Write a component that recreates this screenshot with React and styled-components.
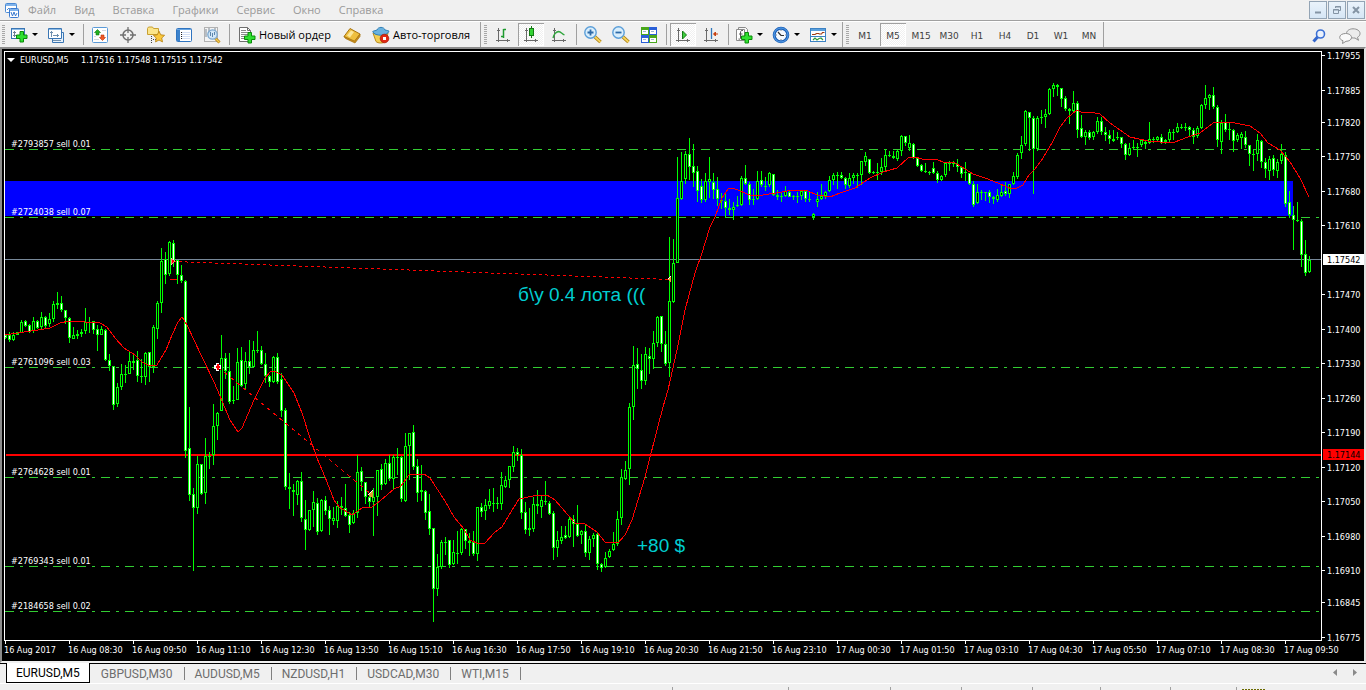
import React, { useState } from "react";
import styled, { createGlobalStyle, css } from "styled-components";

const GlobalStyle = createGlobalStyle`
  * {
    box-sizing: border-box;
  }
  body {
    margin: 0;
    background: #f0f0f0;
    font-family: "Open Sans", "Noto Sans", sans-serif;
    font-size: 11px;
  }
  button {
    font: inherit;
    color: inherit;
    padding: 0;
    margin: 0;
    border: 0;
    background: none;
  }
`;

const Terminal = styled.div`
  display: flex;
  flex-direction: column;
  height: 100vh;
  overflow: hidden;
`;

const MenuBar = styled.nav`
  display: flex;
  align-items: center;
  height: 21px;
  padding: 0 1px 0 4px;
  border-bottom: 1px solid #a0a0a0;
`;

const MenuItems = styled.div`
  display: flex;
  flex: 1;
  gap: 18px;
  margin-left: 8px;
`;

const MenuItem = styled.button`
  color: #9a9a9a;
  line-height: 18px;
`;

const WindowButtons = styled.div`
  display: flex;
  gap: 1px;
`;

const WindowButton = styled.button`
  display: flex;
  align-items: center;
  justify-content: center;
  width: 18px;
  height: 18px;
  border: 1px solid #93a4b5;
  background: linear-gradient(#eaf3fb, #d6e6f5);
`;

const ToolRow = styled.div`
  display: flex;
  height: 26px;
  border-top: 1px solid #fff;
`;

const ToolGroup = styled.div`
  display: flex;
  align-items: center;
  border-right: 1px solid #a0a0a0;
  margin-right: 1px;
`;

const Grip = styled.span`
  width: 3px;
  height: 20px;
  margin: 0 ${(props) => props.$after || 2}px 0 2px;
  background: repeating-linear-gradient(#a8a8a8 0 1px, #f0f0f0 1px 2px);
`;

const Separator = styled.span`
  width: 1px;
  height: 21px;
  margin: 0 2px 0 3px;
  background: #a0a0a0;
`;

const pressed = css`
  background: repeating-conic-gradient(#fff 0 25%, #f0f0f0 0 50%) 0 0 / 2px 2px;
  box-shadow: inset 1px 1px 0 #a0a0a0, inset -1px -1px 0 #fff;
`;

const ToolButton = styled.button`
  display: flex;
  align-items: center;
  justify-content: center;
  width: 26px;
  height: 23px;
  margin: 0 1px;
  padding-top: 1px;
  ${(props) => props.$pressed && pressed}
`;

const DropButton = styled.button`
  display: flex;
  align-items: center;
  gap: 4px;
  width: 37px;
  height: 23px;
  padding-left: 4px;
`;

const TextButton = styled.button`
  display: flex;
  align-items: center;
  gap: 3px;
  width: ${(props) => props.$width}px;
  height: 23px;
  padding-left: 6px;
  color: #000;
  white-space: nowrap;
`;

const PeriodButton = styled(ToolButton)`
  padding-top: 2px;
  font-family: "DejaVu Sans", sans-serif;
  font-size: 9px;
  color: #404040;
`;

const ToolEnd = styled.div`
  display: flex;
  flex: 1;
  align-items: center;
  justify-content: flex-end;
  gap: 13px;
  padding-right: 5px;
`;

const EndButton = styled.button`
  display: flex;
  padding-top: 2px;
`;

const ChartWindow = styled.main`
  display: grid;
  flex: 1;
  min-height: 0;
  grid-template-columns: 1fr 42px;
  grid-template-rows: 1fr 20px;
  padding: 2px 0 0 2px;
  background: #000;
  border: 2px solid #8c8c8c;
  border-right-color: #e3e3e3;
  border-bottom-color: #f0f0f0;
  font-family: "DejaVu Sans Condensed", "DejaVu Sans", sans-serif;
  font-size: 9px;
  color: #fff;
`;

const Plot = styled.div`
  position: relative;
  min-width: 0;
  min-height: 0;
  border: 1px solid #fff;
  overflow: hidden;
`;

const Drawing = styled.svg`
  display: block;
  width: 100%;
  height: 100%;
  overflow: ${(props) => (props.$spill ? "visible" : "hidden")};
`;

const PlotTitle = styled.div`
  position: absolute;
  top: 2px;
  left: 2px;
  display: flex;
  align-items: center;
  gap: 5px;
  line-height: 12px;
`;

const TitleSymbol = styled.span`
  min-width: 56px;
`;

const PriceScale = styled.div`
  min-height: 0;
`;

const TimeScale = styled.div`
  display: flex;
  grid-column: 1 / 3;
  overflow: hidden;
`;

const TimeLabel = styled.span`
  flex: 0 0 64px;
  line-height: 12px;
  white-space: nowrap;

  &::before {
    content: "";
    display: block;
    width: 1px;
    height: 3px;
    margin-left: 1px;
    background: #fff;
  }
`;

const TabBar = styled.div`
  display: flex;
  height: 20px;
  padding-left: 6px;
  border-top: 1px solid #000;
  font-family: Roboto, sans-serif;
  font-size: 12px;
`;

const Tab = styled.button`
  display: flex;
  align-items: center;
  height: 19px;
  padding: 0 11px;
  color: #6d6d6d;

  &::after {
    content: "";
    width: 1px;
    height: 13px;
    margin: 0 -12px 0 11px;
    background: #808080;
  }

  ${(props) =>
    props.$active &&
    css`
      margin-top: -1px;
      height: 20px;
      padding: 0 9px;
      color: #000;
      background: #fff;
      border: 1px solid #000;
      border-top: 0;

      &::after {
        display: none;
      }
    `}
`;

const TabArrows = styled.div`
  display: flex;
  gap: 12px;
  align-items: center;
  margin-left: auto;
  padding-right: 8px;
`;

const ArrowButton = styled.button`
  display: flex;
  padding-bottom: 3px;
`;

const StatusBar = styled.footer`
  display: flex;
  justify-content: flex-end;
  height: 7px;
  padding: 3px 100px 0 0;
  border-top: 1px solid #fff;
`;

const StatusCell = styled.span`
  width: ${(props) => props.$width}px;
  border-left: 1px solid #a0a0a0;
`;

const Traffic = styled.span`
  display: block;
  width: 24px;
  height: 1px;
  margin: 2px 0 0 5px;
  background: repeating-linear-gradient(90deg, #6b6b00 0 2px, #f0f0f0 2px 3px);
`;

/* ---------- icons ---------- */

function Icon({ children, size = 18, width }) {
  return (
    <svg width={width || size} height={size} viewBox={`0 0 ${width || size} ${size}`} fill="none" aria-hidden="true">
      {children}
    </svg>
  );
}

const Caret = () => (
  <svg width="6" height="3" viewBox="0 0 6 3" aria-hidden="true">
    <path d="M0 0h6L3 3z" fill="#000" />
  </svg>
);

const Plus = ({ x, y }) => (
  <path
    transform={`translate(${x} ${y})`}
    d="M4 .5h3.500V4H11v3.500H7.500V11H4V7.500H.5V4H4z"
    fill="#2fe02f"
    stroke="#0a8a0a"
  />
);

const Axes = () => (
  <g stroke="#6a6a6a" shapeRendering="crispEdges">
    <path d="M4.500 2v14M2 14.500h14" />
    <path d="M3 4.500h3M13.500 13v3" />
  </g>
);

const LogoIcon = () => (
  <Icon size={16}>
    <rect x="1.500" y="1.500" width="11" height="9" rx="1" fill="#fff" stroke="#4a8ad4" />
    <path d="M2 3h10" stroke="#7fb2ea" strokeWidth="2" />
    <path d="M3 8l2-2 2 3" stroke="#4a8ad4" />
    <rect x="5.500" y="6.500" width="9" height="9" rx="1" fill="#fff" stroke="#3b7bd0" />
    <path d="M6 8h8" stroke="#7fb2ea" strokeWidth="2" />
    <path d="M7 10l1.500 4L10 10l1.500 4 1.500-3" stroke="#3b7bd0" />
  </Icon>
);

const NewChartIcon = () => (
  <Icon>
    <rect x="1.500" y="2.500" width="13" height="10" fill="#fff" stroke="#3a76b4" />
    <path d="M2 3.500h12" stroke="#8dbbe6" />
    <path d="M4.500 5v6M3 6.500h3M3 9.500h5" stroke="#6f8196" />
    <Plus x={6} y={5} />
  </Icon>
);

const ProfilesIcon = () => (
  <Icon>
    <path d="M5.500 6.500h11v10h-11z" fill="#e8f2fc" stroke="#3a76b4" />
    <path d="M1.500 2.500h13v10h-13z" fill="#fff" stroke="#3a76b4" />
    <path d="M2 3.500h12" stroke="#8dbbe6" />
    <path d="M4.500 5v6M3 6.500h3M6 9.500h6M10.500 8v3M6 14.500h8" stroke="#6f8fae" />
  </Icon>
);

const MarketIcon = () => (
  <Icon>
    <rect x="1.500" y="1.500" width="15" height="15" rx="1" fill="#fff" stroke="#5a9ad8" />
    <path d="M3 13.500h5M11 4.500h4M3 10.500h2" stroke="#d4d9df" />
    <path d="M6.500 3.500l3 3H8v2.500H5V6.500H3.500z" fill="#22b022" stroke="#0d7a0d" strokeWidth=".6" />
    <path d="M11.500 14.500l-3-3H10V9h3v2.500h1.500z" fill="#f05a28" stroke="#b83208" strokeWidth=".6" />
  </Icon>
);

const CrosshairIcon = () => (
  <Icon>
    <circle cx="9" cy="9" r="5" stroke="#707070" strokeWidth="1.500" />
    <path d="M9 1v6M9 11v6M1 9h6M11 9h6" stroke="#707070" strokeWidth="1.300" />
  </Icon>
);

const FavoritesIcon = () => (
  <Icon>
    <path d="M.5 2.500L1.500 1h4l1 1.500h5v6h-11z" fill="#fbe58a" stroke="#c8a032" />
    <path d="M4.500 10v7M6 13.500h3" stroke="#444" strokeDasharray="1 1" />
    <path
      d="M12 5.200l1.700 3.600 3.900.5-2.900 2.700.8 3.900-3.500-1.900-3.500 1.900.8-3.900-2.900-2.700 3.900-.5z"
      fill="#fbc83c"
      stroke="#b98718"
      strokeWidth=".9"
    />
  </Icon>
);

const NavigatorIcon = () => (
  <Icon>
    <rect x="1.500" y="2.500" width="15" height="13" rx="1" fill="#fff" stroke="#2f74c0" />
    <path d="M2 3.500h14" stroke="#6aa6e2" />
    <path d="M2 4h3v11H2z" fill="#3c82cc" />
    <path d="M7 6.500h8M7 8.500h8M7 10.500h8M7 12.500h8" stroke="#d3dff5" />
    <path d="M6 6.500h1M6 8.500h1M6 10.500h1M6 12.500h1" stroke="#222" />
  </Icon>
);

const TesterIcon = () => (
  <Icon>
    <rect x="1.500" y="1.500" width="13" height="14" fill="#f4f4f4" stroke="#b2b2b2" />
    <path d="M3 3v8M6 2v5M12 2v6" stroke="#7b8794" />
    <path d="M12.500 12.500l4 4" stroke="#b47f14" strokeWidth="3" />
    <path d="M12.500 12.500l4 4" stroke="#f2cb52" strokeWidth="1.400" />
    <circle cx="9.500" cy="8.500" r="4.700" fill="#cfe6f8" fillOpacity=".9" stroke="#7ba7cf" strokeWidth="1.300" />
    <path d="M7.500 6v4M9.500 7v4M11.500 6v3" stroke="#5c86ad" />
  </Icon>
);

const NewOrderIcon = () => (
  <Icon>
    <path d="M1.500 1.500h8l3 3v11h-11z" fill="#fff" stroke="#6f6f6f" />
    <path d="M9.500 1.500v3h3" stroke="#6f6f6f" />
    <path d="M3 4.500h5M3 6.500h7M3 8.500h7M3 10.500h4M3 12.500h4" stroke="#8a8a8a" />
    <Plus x={6} y={6} />
  </Icon>
);

const EditorIcon = () => (
  <Icon>
    <path d="M1 10.500L7 2.500l10 5.500-5.500 8z" fill="#eebf3f" stroke="#a87410" />
    <path d="M1 10.500l1.500 2L12 17l5-6.500V8l-5.500 7z" fill="#c78d1c" stroke="#a87410" strokeWidth=".7" />
    <path d="M4 9.500l4-5 3 1.500-4 5.500z" fill="#fbe69b" />
  </Icon>
);

const AutoTradeIcon = () => (
  <Icon>
    <path d="M1 7c2 1 12 2 15 0l-2 8.500c-3 2-8 2-10 0z" fill="#f3cf52" stroke="#b88a1c" />
    <path
      d="M.7 5.500C2 4.500 4 4.800 5 4c1-3.500 7-3.500 8 0 1.500.5 3 .3 4 1.200-1 3-5 4-8 4S1.500 8.500.7 5.500z"
      fill="#69b2df"
      stroke="#2f7fb6"
    />
    <circle cx="12.500" cy="12.500" r="4.300" fill="#e02a14" stroke="#a81404" strokeWidth=".7" />
    <rect x="11" y="11" width="3" height="3" fill="#fff" />
  </Icon>
);

const BarsIcon = () => (
  <Icon>
    <Axes />
    <path d="M9.500 3v9M7 10.500h2.500M9.500 3.500H12" stroke="#1f9a2f" strokeWidth="1.500" />
  </Icon>
);

const CandlesIcon = () => (
  <Icon>
    <Axes />
    <path d="M9.500 0v12" stroke="#157a15" />
    <rect x="7.500" y="2.500" width="4" height="7" fill="#34d334" stroke="#157a15" />
  </Icon>
);

const LineIcon = () => (
  <Icon>
    <Axes />
    <path d="M3 12c1-4 3-6 5.500-6.500C11 5.500 12 8 14.500 9" stroke="#2fa53c" strokeWidth="1.300" />
  </Icon>
);

function ZoomIcon({ plus }) {
  return (
    <Icon>
      <path d="M10.500 10.500l6 5.500" stroke="#a87c10" strokeWidth="3.500" />
      <path d="M10.500 10.500l6 5.500" stroke="#f6d35a" strokeWidth="1.800" />
      <circle cx="6.500" cy="6.500" r="5.700" fill="#d9eefc" stroke="#5b9ed8" strokeWidth="1.400" />
      <path d={plus ? "M3.500 6.500h6M6.500 3.500v6" : "M3.500 6.500h6"} stroke="#2d6aa8" strokeWidth="1.800" />
    </Icon>
  );
}

const TileIcon = () => (
  <Icon>
    <path d="M1 1h8v8H1z" fill="#4aa81c" />
    <path d="M9 1h8v8H9z" fill="#2a5fd8" />
    <path d="M1 9h8v8H1z" fill="#2a5fd8" />
    <path d="M9 9h8v8H9z" fill="#4aa81c" />
    <path d="M2 4h6v4H2zM10 4h6v4h-6zM2 12h6v4H2zM10 12h6v4h-6z" fill="#fff" />
    <path d="M3 5.500h3M11 5.500h3M3 13.500h3M11 13.500h3" stroke="#9db4d8" />
  </Icon>
);

const AutoScrollIcon = () => (
  <Icon>
    <Axes />
    <path d="M8.500 5v8l4-4z" fill="#3ccf3c" stroke="#157a15" />
  </Icon>
);

const ShiftIcon = () => (
  <Icon>
    <Axes />
    <path d="M9.500 2v11" stroke="#3277bb" strokeWidth="1.300" />
    <path d="M16 8h-4M13.500 6L11.500 8l2 2z" stroke="#c8410f" fill="#c8410f" />
  </Icon>
);

const IndicatorsIcon = () => (
  <Icon>
    <path d="M3.500 3.500V1.500h7l2 2v10h-3" fill="#f7f7f7" stroke="#8a8a8a" />
    <path d="M1.500 3.500h8v11h-8z" fill="#fff" stroke="#8a8a8a" />
    <path d="M8 4.500c-2-.5-2.500.5-2.500 2.500v5c0 1-.8 1.500-2 1M4 8h3.500" stroke="#555" />
    <Plus x={6} y={6} />
  </Icon>
);

const ClockIcon = () => (
  <Icon>
    <circle cx="9" cy="9" r="6.800" fill="#f6fafe" stroke="#1f62b8" strokeWidth="3" />
    <circle cx="9" cy="9" r="7" stroke="#58a2ec" strokeWidth="1" />
    <path d="M6 6l3 3.500h3" stroke="#333" strokeWidth="1.200" />
    <path d="M9 4v1M9 13v1M4 9h1M13 9h1" stroke="#888" />
  </Icon>
);

const TemplatesIcon = () => (
  <Icon>
    <rect x="1.500" y="2.500" width="15" height="13" fill="#fff" stroke="#3c82c4" />
    <path d="M2 4h14" stroke="#5a9fdc" strokeWidth="2" />
    <path d="M2 10.500h14" stroke="#3c82c4" />
    <path d="M3 8.500h3l1.500-1h2l1 .5h2l1-1.500h2" stroke="#a03c14" strokeWidth="1.200" />
    <path d="M4 14l2-2 2 2 2-1.500 2-.5 2 2" stroke="#2f9a3c" strokeWidth="1.200" />
  </Icon>
);

const SearchIcon = () => (
  <Icon size={14}>
    <path d="M1.500 12.500L6 7.500" stroke="#3466cc" strokeWidth="3" />
    <circle cx="8.500" cy="5" r="4" fill="#eaf1fc" stroke="#3b6fd4" strokeWidth="1.600" />
  </Icon>
);

const ChatIcon = () => (
  <Icon size={16} width={22}>
    <path
      d="M14 .8c4 0 7 2 7 4.700 0 1.800-1 3-2.500 3.800l1 3-3.500-2.300c-4 .3-8.500-1.500-8.500-4.500C7.500 2.800 10.500.8 14 .8z"
      fill="#ececec"
      stroke="#8e8e8e"
    />
    <path
      d="M6.500 5.500c3.500 0 6 1.700 6 4s-2.500 3.800-5.500 3.800L3.500 15.500l.5-2.800C2 12 .7 10.800.7 9.300c0-2.300 2.800-3.800 5.800-3.800z"
      fill="#fafafa"
      stroke="#8e8e8e"
    />
  </Icon>
);

/* ---------- chart data ---------- */

// high, body top, body bottom, low (px on the price axis) and direction
const CANDLES = `
334 335 338 339 d|332 335 340 342 d|332 335 340 341 u|332 332 335 335 u|320 322 333 333 u|320 321 326 327 d|324 325 332 333 d|317 321 331 333 u|320 321 328 329 d|312 317 327 329 u|316 317 326 328 d|313 319 324 327 u|301 304 319 322 u|292 303 305 309 d|296 303 310 312 d|310 310 318 324 d|317 318 338 343 d|327 335 339 339 u|330 334 336 339 u|329 332 334 337 u|308 322 331 334 u|317 322 323 333 u|321 321 330 334 d|325 329 335 351 d|326 329 335 335 u|329 330 360 361 d|354 360 366 371 d|366 366 405 410 d|383 387 404 407 u|364 374 387 390 u|365 374 375 383 u|352 361 374 374 u|355 361 363 370 u|351 360 376 382 d|359 376 377 383 d|352 353 377 385 u|352 352 367 382 d|325 327 367 373 u|301 303 329 339 u|248 261 303 313 u|252 259 275 284 d|241 242 274 276 u|240 243 261 267 d|260 260 275 284 d|265 275 281 283 d|280 281 451 458 d|407 448 495 501 d|488 494 508 571 d|456 464 508 514 u|464 464 494 495 d|438 456 493 504 u|452 456 457 469 u|404 426 455 465 u|412 413 426 440 u|335 358 411 411 u|353 358 371 379 d|353 371 402 404 d|386 400 401 404 u|348 362 400 400 u|347 360 386 387 d|352 361 384 390 u|340 361 367 374 d|341 350 367 367 u|331 350 351 353 d|346 350 364 365 d|353 364 376 383 d|375 376 382 387 d|356 357 382 383 u|353 357 382 384 d|373 379 411 417 d|408 410 487 490 d|473 487 489 509 d|484 490 492 516 d|480 481 495 505 u|472 481 518 522 d|500 519 530 550 d|510 510 530 531 u|491 502 510 527 u|498 503 532 535 d|499 500 531 532 u|496 500 511 515 d|506 510 519 535 d|507 518 521 525 u|501 506 521 528 u|497 506 508 515 u|484 508 516 517 d|512 515 525 533 d|510 513 523 524 u|455 472 513 518 u|467 471 482 491 d|482 482 497 504 d|495 497 502 508 d|488 497 502 536 u|470 470 497 516 u|464 469 485 490 d|459 463 484 485 u|455 463 479 481 d|455 457 479 490 u|448 457 458 475 u|456 457 499 502 d|433 446 501 502 u|433 433 446 480 u|425 432 467 470 d|459 466 493 502 d|465 490 492 501 u|490 491 513 520 d|494 511 529 535 d|528 528 589 622 d|554 567 589 596 u|540 542 567 569 u|537 542 543 555 u|540 540 565 568 d|540 552 564 565 u|531 553 554 564 u|528 529 553 555 u|529 529 541 549 d|533 541 543 556 d|531 542 554 556 d|507 507 554 561 u|503 507 512 517 d|499 505 511 520 u|489 501 506 509 u|488 503 504 512 u|497 503 504 509 u|472 485 504 510 u|476 480 487 488 u|466 466 480 488 u|446 452 467 472 u|448 452 455 461 d|449 455 513 519 d|502 512 530 534 d|508 528 530 536 u|497 504 529 532 u|490 504 506 514 d|495 500 507 518 u|481 501 502 505 u|501 503 514 515 d|511 513 548 560 d|531 540 548 557 u|526 537 541 544 u|526 535 538 539 d|516 519 537 538 u|515 519 524 547 d|505 524 536 537 d|530 531 535 544 u|525 531 553 557 d|536 539 553 560 u|533 535 539 547 u|533 534 564 570 d|563 564 568 572 d|552 558 567 568 u|549 551 557 558 u|532 544 550 551 u|511 519 544 546 u|469 477 518 525 u|461 470 479 480 u|403 407 469 485 u|346 365 407 420 u|348 364 369 389 d|354 370 381 389 d|347 354 381 385 u|348 356 359 374 d|331 343 359 369 u|316 317 343 347 u|316 316 344 352 d|331 344 364 366 d|237 301 363 377 u|239 263 302 303 u|157 198 263 263 u|152 181 199 200 u|151 154 179 184 u|138 154 167 180 d|144 166 173 187 d|166 171 191 202 d|179 186 200 203 d|173 181 200 202 u|157 179 182 198 u|173 182 190 199 d|177 189 199 206 d|193 200 201 209 d|194 201 208 218 d|199 208 210 215 d|202 207 210 220 u|196 205 206 207 u|176 178 205 206 u|165 178 184 185 d|182 184 200 205 d|189 199 200 205 d|171 181 199 200 u|171 180 185 187 d|177 186 187 191 d|172 173 185 187 u|174 174 195 196 d|190 195 197 200 d|192 196 197 202 d|186 191 196 197 u|190 192 197 197 d|195 196 197 200 d|192 196 197 203 u|190 191 196 200 u|191 191 199 202 d|191 199 200 202 d|213 214 217 220 u|192 199 202 207 u|184 196 199 200 u|191 192 196 199 u|176 180 191 192 u|173 175 180 185 u|172 175 176 189 d|172 175 178 179 d|177 178 185 189 d|173 178 186 188 u|173 175 178 184 u|173 175 176 188 d|161 161 175 185 u|152 156 162 166 u|159 159 173 174 d|171 172 173 174 d|163 172 173 180 u|158 167 172 175 u|149 155 167 171 u|151 155 156 157 u|151 156 158 159 d|150 151 159 161 u|135 136 151 156 u|136 136 143 146 d|135 143 148 151 u|143 144 158 159 d|157 158 166 167 d|164 165 171 172 d|163 171 172 173 u|171 172 173 175 u|162 168 173 174 d|171 173 180 183 d|175 176 180 181 u|163 163 175 177 u|161 163 164 171 u|161 163 164 167 u|159 164 167 172 d|166 167 174 178 d|162 172 173 181 d|173 173 184 185 d|181 184 205 207 d|184 192 203 204 u|190 192 193 200 u|192 192 193 201 d|190 192 197 203 d|196 197 199 204 d|189 195 200 202 u|184 192 196 197 u|182 191 194 196 d|184 184 194 198 u|172 176 184 185 u|153 155 177 179 u|136 145 153 159 u|110 111 144 146 u|112 112 118 151 d|116 118 149 194 d|116 118 149 151 u|110 117 118 124 u|109 114 117 128 u|88 89 114 115 u|83 85 89 97 u|84 85 87 96 d|88 88 99 107 d|96 98 109 111 d|108 109 111 124 d|91 103 111 113 u|101 103 130 138 d|115 128 137 138 d|130 132 137 145 u|130 132 138 140 d|131 132 137 140 u|117 121 132 134 u|117 121 132 135 d|127 132 135 141 d|130 135 139 144 d|130 139 141 142 u|132 137 138 140 u|137 137 144 148 d|143 144 155 160 d|143 148 155 156 u|140 147 148 150 u|143 147 148 157 u|139 140 145 147 u|140 142 144 149 d|122 139 143 144 u|137 139 140 143 u|136 137 140 142 u|134 137 143 144 d|139 140 142 144 u|129 132 140 142 u|129 132 133 140 u|123 127 132 133 u|124 127 128 129 u|123 127 128 131 u|126 127 130 136 d|128 130 137 144 d|126 128 136 138 u|104 105 128 129 u|85 98 105 109 u|94 95 98 110 u|87 95 107 109 d|105 107 140 147 d|120 123 142 154 u|114 122 130 132 d|123 129 130 140 u|129 130 141 152 d|133 135 140 142 u|132 134 138 149 u|131 137 145 148 d|145 145 154 166 d|150 154 155 171 d|134 140 154 161 u|140 141 162 168 d|158 162 169 178 d|156 159 171 180 u|155 158 170 176 d|159 162 171 178 u|144 154 161 164 u|152 155 204 207 d|191 202 215 218 d|206 215 220 250 d|202 220 221 222 u|219 221 255 267 d|240 254 273 276 d|256 260 272 273 u
`
  .trim()
  .split("|")
  .map((row) => {
    const [high, top, bottom, low, dir] = row.split(" ");
    return { high: +high, top: +top, bottom: +bottom, low: +low, down: dir === "d" };
  });

const AVERAGE =
  "5,335 24,332 38,330 50,328 60,323 69,321 100,323 107,327 115,338 124,348 135,355 142,362 150,366 157,365 166,350 172,335 178,322 182,317 187,325 194,340 202,357 214,382 220,396 230,420 238,432 242,428 254,400 265,378 270,372 274,371 282,375 294,393 302,413 310,438 317,458 325,477 334,500 339,507 352,515 362,508 372,507 380,501 394,489 401,486 409,475 424,474 430,478 445,501 454,517 464,529 470,540 479,544 485,543 494,533 502,527 514,507 519,499 533,496 547,495 555,500 568,515 575,523 585,524 597,532 605,542 618,543 625,535 632,520 645,477 657,430 663,407 668,390 677,350 685,310 695,273 702,253 710,227 715,217 722,198 728,189 733,188 740,191 752,196 763,195 782,192 792,190 808,191 817,195 830,197 840,193 855,188 870,178 883,172 897,168 908,158 915,157 922,159 938,160 943,162 955,163 962,167 973,174 988,179 1000,184 1012,189 1017,188 1023,185 1029,175 1035,169 1043,158 1052,143 1060,127 1067,118 1077,110 1083,113 1090,112 1100,114 1110,123 1130,137 1148,141 1160,142 1175,142 1188,137 1200,133 1213,123 1230,122 1250,126 1260,133 1268,143 1280,150 1290,162 1300,178 1309,197";

const ORDERS = [
  { id: "#2793857 sell 0.01", y: 149 },
  { id: "#2724038 sell 0.07", y: 217 },
  { id: "#2761096 sell 0.03", y: 367 },
  { id: "#2764628 sell 0.01", y: 477 },
  { id: "#2769343 sell 0.01", y: 566 },
  { id: "#2184658 sell 0.02", y: 611 },
];

const PRICES = [
  1.17955, 1.17885, 1.1782, 1.1775, 1.1768, 1.1761, 1.1747, 1.174, 1.1733, 1.1726, 1.1719, 1.1712, 1.1705, 1.1698,
  1.1691, 1.16845, 1.16775,
];

const TIMES = [
  "16 Aug 2017", "16 Aug 08:30", "16 Aug 09:50", "16 Aug 11:10", "16 Aug 12:30", "16 Aug 13:50", "16 Aug 15:10",
  "16 Aug 16:30", "16 Aug 17:50", "16 Aug 19:10", "16 Aug 20:30", "16 Aug 21:50", "16 Aug 23:10", "17 Aug 00:30",
  "17 Aug 01:50", "17 Aug 03:10", "17 Aug 04:30", "17 Aug 05:50", "17 Aug 07:10", "17 Aug 08:30", "17 Aug 09:50",
];

const MENU = ["Файл", "Вид", "Вставка", "Графики", "Сервис", "Окно", "Справка"];
const PERIODS = ["M1", "M5", "M15", "M30", "H1", "H4", "D1", "W1", "MN"];
const TABS = ["EURUSD,M5", "GBPUSD,M30", "AUDUSD,M5", "NZDUSD,H1", "USDCAD,M30", "WTI,M15"];
const STATUS = [116, 102, 71, 71, 68, 70, 66, 30];

const priceToY = (price) => Math.round(55 + (1.17955 - price) * 49320);

function Candle({ x, high, top, bottom, low, down }) {
  const height = Math.max(bottom - top, 1);
  return (
    <g>
      <rect x={x} y={high} width="1" height={low - high} fill="#0f0" />
      <rect x={x - 1} y={top} width="3" height={height} fill="#0f0" />
      {height > 2 && <rect x={x} y={top + 1} width="1" height={height - 2} fill={down ? "#fff" : "#000"} />}
    </g>
  );
}

function ChartDrawing() {
  return (
    <Drawing role="img" aria-label="EURUSD,M5">
      <g transform="translate(-5 -52)" shapeRendering="crispEdges">
        <rect x="5" y="181" width="1288" height="35" fill="#00f" />
        {ORDERS.map((order) => (
          <line
            key={order.id}
            x1="5"
            x2="1321"
            y1={order.y + 0.5}
            y2={order.y + 0.5}
            stroke="#32cd32"
            strokeDasharray="9 6 3 6"
          />
        ))}
        <rect x="5" y="259" width="100%" height="1" fill="#778899" />
        <rect x="6" y="454" width="100%" height="2" fill="#f00" />
        {CANDLES.map((candle, i) => (
          <Candle key={i} x={5 + i * 4} {...candle} />
        ))}
        <polyline points={AVERAGE} fill="none" stroke="#f00" />
        <path d="M173 261.500L671 279.500" stroke="#f00" strokeDasharray="3 3" />
        <path d="M218 367L372 495" stroke="#f00" strokeDasharray="4 4" />
        <path d="M170 279.500h7" stroke="#f00" />
        <path d="M171 258l4 3-4 4z" fill="#f00" stroke="#fff" strokeWidth=".5" />
        <path d="M216 363h3v2h2v4h-2v2h-3v-2h-2v-4h2z" fill="#fff" />
        <path d="M217 364h2v2h1v2h-1v2h-2v-2h-1v-2h1z" fill="#f00" />
        <path d="M368 495l5-5v8z" fill="#e0a030" />
        <path d="M368 495l5-5" stroke="#fff" />
        <path d="M668 279l3-3v7z" fill="#e0a030" />
        <path d="M668 279l3-3" stroke="#fff" />
      </g>
      <g transform="translate(-5 -52)" fill="#fff" stroke="none">
        {ORDERS.map((order) => (
          <text key={order.id} x="11" y={order.y - 2}>
            {order.id}
          </text>
        ))}
        <g fill="#00ced1" fontFamily="'Liberation Sans', Arial, sans-serif" fontSize="19">
          <text x="518" y="301">
            б\у 0.4 лота (((
          </text>
          <text x="637" y="552">
            +80 $
          </text>
        </g>
      </g>
    </Drawing>
  );
}

function ScaleDrawing() {
  return (
    <Drawing role="img" aria-label="1.17542" $spill>
      <g transform="translate(0 -51)" fill="#fff">
        {PRICES.map((price) => (
          <g key={price}>
            <rect x="0" y={priceToY(price)} width="3" height="1" />
            <text x="5" y={priceToY(price) + 4}>
              {price.toFixed(5)}
            </text>
          </g>
        ))}
        <rect x="1" y="254" width="41" height="11" />
        <text x="5" y="263" fill="#000">
          1.17542
        </text>
        <rect x="1" y="449" width="41" height="11" fill="#f00" />
        <text x="5" y="458" fill="#000">
          1.17144
        </text>
      </g>
    </Drawing>
  );
}

function App() {
  const [period, setPeriod] = useState("M5");
  const [tab, setTab] = useState("EURUSD,M5");

  return (
    <>
      <GlobalStyle />
      <Terminal>
        <MenuBar>
          <LogoIcon />
          <MenuItems>
            {MENU.map((item) => (
              <MenuItem key={item}>{item}</MenuItem>
            ))}
          </MenuItems>
          <WindowButtons>
            <WindowButton aria-label="Свернуть">
              <Icon size={10}>
                <path d="M2 7.500h6" stroke="#8494a4" strokeWidth="2" />
              </Icon>
            </WindowButton>
            <WindowButton aria-label="Восстановить">
              <Icon size={10}>
                <path d="M3.500 3V1.500h5v4H7M3 2h6" stroke="#8494a4" />
                <path d="M1.500 4.500h5v4h-5zM1 5h6" stroke="#8494a4" />
              </Icon>
            </WindowButton>
            <WindowButton aria-label="Закрыть">
              <Icon size={10}>
                <path d="M2 2l6 6M8 2L2 8" stroke="#8494a4" strokeWidth="2" />
              </Icon>
            </WindowButton>
          </WindowButtons>
        </MenuBar>

        <ToolRow>
          <ToolGroup>
            <Grip $after={1} />
            <DropButton aria-label="Новый график">
              <NewChartIcon />
              <Caret />
            </DropButton>
            <DropButton aria-label="Профили">
              <ProfilesIcon />
              <Caret />
            </DropButton>
            <Separator />
            <ToolButton aria-label="Обзор рынка">
              <MarketIcon />
            </ToolButton>
            <ToolButton aria-label="Окно данных">
              <CrosshairIcon />
            </ToolButton>
            <ToolButton aria-label="Навигатор">
              <FavoritesIcon />
            </ToolButton>
            <ToolButton aria-label="Терминал">
              <NavigatorIcon />
            </ToolButton>
            <ToolButton aria-label="Тестер стратегий">
              <TesterIcon />
            </ToolButton>
            <Separator />
            <TextButton $width={106}>
              <NewOrderIcon />
              Новый ордер
            </TextButton>
            <ToolButton aria-label="Редактор">
              <EditorIcon />
            </ToolButton>
            <TextButton $width={114}>
              <AutoTradeIcon />
              Авто-торговля
            </TextButton>
          </ToolGroup>
          <ToolGroup>
            <Grip />
            <ToolButton aria-label="Бары">
              <BarsIcon />
            </ToolButton>
            <ToolButton aria-label="Свечи" $pressed>
              <CandlesIcon />
            </ToolButton>
            <ToolButton aria-label="Линия">
              <LineIcon />
            </ToolButton>
            <Separator />
            <ToolButton aria-label="Увеличить">
              <ZoomIcon plus />
            </ToolButton>
            <ToolButton aria-label="Уменьшить">
              <ZoomIcon />
            </ToolButton>
            <ToolButton aria-label="Окна рядом">
              <TileIcon />
            </ToolButton>
            <Separator />
            <ToolButton aria-label="Автопрокрутка" $pressed>
              <AutoScrollIcon />
            </ToolButton>
            <ToolButton aria-label="Сдвиг графика">
              <ShiftIcon />
            </ToolButton>
            <Separator />
            <DropButton aria-label="Индикаторы">
              <IndicatorsIcon />
              <Caret />
            </DropButton>
            <DropButton aria-label="Периоды">
              <ClockIcon />
              <Caret />
            </DropButton>
            <DropButton aria-label="Шаблоны">
              <TemplatesIcon />
              <Caret />
            </DropButton>
          </ToolGroup>
          <ToolGroup>
            <Grip />
            {PERIODS.map((item) => (
              <PeriodButton key={item} $pressed={item === period} onClick={() => setPeriod(item)}>
                {item}
              </PeriodButton>
            ))}
          </ToolGroup>
          <ToolEnd>
            <EndButton aria-label="Поиск">
              <SearchIcon />
            </EndButton>
            <EndButton aria-label="Чат">
              <ChatIcon />
            </EndButton>
          </ToolEnd>
        </ToolRow>

        <ChartWindow>
          <Plot>
            <ChartDrawing />
            <PlotTitle>
              <svg width="8" height="4" viewBox="0 0 8 4" aria-hidden="true">
                <path d="M0 0h8L4 4z" fill="#fff" />
              </svg>
              <TitleSymbol>EURUSD,M5</TitleSymbol>
              <span>1.17516 1.17548 1.17515 1.17542</span>
            </PlotTitle>
          </Plot>
          <PriceScale>
            <ScaleDrawing />
          </PriceScale>
          <TimeScale>
            {TIMES.map((time) => (
              <TimeLabel key={time}>{time}</TimeLabel>
            ))}
          </TimeScale>
        </ChartWindow>

        <TabBar>
          {TABS.map((item) => (
            <Tab key={item} $active={item === tab} onClick={() => setTab(item)}>
              {item}
            </Tab>
          ))}
          <TabArrows>
            <ArrowButton aria-label="Назад">
              <Icon size={7}>
                <path d="M5 0v7L1 3.500z" fill="#8a8a8a" />
              </Icon>
            </ArrowButton>
            <ArrowButton aria-label="Вперёд">
              <Icon size={7}>
                <path d="M2 0v7l4-3.500z" fill="#8a8a8a" />
              </Icon>
            </ArrowButton>
          </TabArrows>
        </TabBar>

        <StatusBar>
          {STATUS.map((width, i) => (
            <StatusCell key={i} $width={width}>
              {i === STATUS.length - 1 && <Traffic />}
            </StatusCell>
          ))}
        </StatusBar>
      </Terminal>
    </>
  );
}

export default App;
